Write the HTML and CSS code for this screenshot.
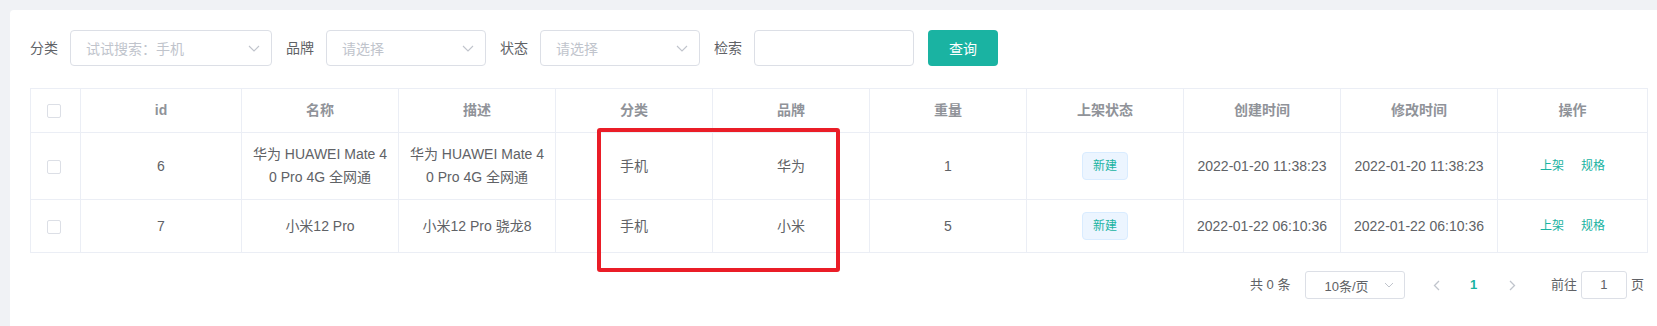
FILE: index.html
```html
<!DOCTYPE html>
<html lang="zh-CN">
<head>
<meta charset="utf-8">
<title>商品列表</title>
<link rel="stylesheet" href="styles.css">
</head>
<body>
<div class="page">
  <div class="card">
    <form class="filters">
      <div class="form-item">
        <label class="form-label">分类</label>
        <div class="select select-wide">
          <span class="placeholder">试试搜索：手机</span>
          <svg class="arrow" width="12" height="7" viewBox="0 0 12 7"><polyline points="1,1 6,6 11,1" fill="none" stroke="#c0c4cc" stroke-width="1.1"/></svg>
        </div>
      </div>
      <div class="form-item">
        <label class="form-label">品牌</label>
        <div class="select select-narrow">
          <span class="placeholder">请选择</span>
          <svg class="arrow" width="12" height="7" viewBox="0 0 12 7"><polyline points="1,1 6,6 11,1" fill="none" stroke="#c0c4cc" stroke-width="1.1"/></svg>
        </div>
      </div>
      <div class="form-item">
        <label class="form-label">状态</label>
        <div class="select select-narrow">
          <span class="placeholder">请选择</span>
          <svg class="arrow" width="12" height="7" viewBox="0 0 12 7"><polyline points="1,1 6,6 11,1" fill="none" stroke="#c0c4cc" stroke-width="1.1"/></svg>
        </div>
      </div>
      <div class="form-item">
        <label class="form-label">检索</label>
        <div class="text-input"></div>
      </div>
      <button type="button" class="btn-primary">查询</button>
    </form>

    <div class="table-wrap">
      <table class="data-table">
        <colgroup>
          <col class="col-check">
          <col class="col-id">
          <col class="col-std"><col class="col-std"><col class="col-std"><col class="col-std">
          <col class="col-std"><col class="col-std"><col class="col-std"><col class="col-std">
          <col class="col-ops">
        </colgroup>
        <thead>
          <tr>
            <th class="check-cell"><div class="cell"><span class="checkbox"></span></div></th>
            <th><div class="cell">id</div></th>
            <th><div class="cell">名称</div></th>
            <th><div class="cell">描述</div></th>
            <th><div class="cell">分类</div></th>
            <th><div class="cell">品牌</div></th>
            <th><div class="cell">重量</div></th>
            <th><div class="cell">上架状态</div></th>
            <th><div class="cell">创建时间</div></th>
            <th><div class="cell">修改时间</div></th>
            <th><div class="cell">操作</div></th>
          </tr>
        </thead>
        <tbody>
          <tr>
            <td class="check-cell"><div class="cell"><span class="checkbox"></span></div></td>
            <td><div class="cell">6</div></td>
            <td><div class="cell">华为 HUAWEI Mate 40 Pro 4G 全网通</div></td>
            <td><div class="cell">华为 HUAWEI Mate 40 Pro 4G 全网通</div></td>
            <td><div class="cell">手机</div></td>
            <td><div class="cell">华为</div></td>
            <td><div class="cell">1</div></td>
            <td><div class="cell"><span class="tag">新建</span></div></td>
            <td><div class="cell">2022-01-20 11:38:23</div></td>
            <td><div class="cell">2022-01-20 11:38:23</div></td>
            <td><div class="cell"><span class="ops"><a class="op-link">上架</a><a class="op-link">规格</a></span></div></td>
          </tr>
          <tr>
            <td class="check-cell"><div class="cell"><span class="checkbox"></span></div></td>
            <td><div class="cell">7</div></td>
            <td><div class="cell">小米12 Pro</div></td>
            <td><div class="cell">小米12 Pro 骁龙8</div></td>
            <td><div class="cell">手机</div></td>
            <td><div class="cell">小米</div></td>
            <td><div class="cell">5</div></td>
            <td><div class="cell"><span class="tag">新建</span></div></td>
            <td><div class="cell">2022-01-22 06:10:36</div></td>
            <td><div class="cell">2022-01-22 06:10:36</div></td>
            <td><div class="cell"><span class="ops"><a class="op-link">上架</a><a class="op-link">规格</a></span></div></td>
          </tr>
        </tbody>
      </table>
      <div class="highlight-box"></div>
    </div>

    <div class="pagination">
      <span class="pg-total">共 0 条</span>
      <span class="pg-sizes">
        <span class="pg-select">
          <span class="pg-select-text">10条/页</span>
          <svg class="pg-select-arrow" width="10" height="6" viewBox="0 0 10 6"><polyline points="1,1 5,5 9,1" fill="none" stroke="#c0c4cc" stroke-width="1"/></svg>
        </span>
      </span>
      <span class="pg-btn pg-prev"><svg width="7" height="11" viewBox="0 0 7 11"><polyline points="6,1 1.5,5.5 6,10" fill="none" stroke="#c0c4cc" stroke-width="1.3"/></svg></span>
      <span class="pg-pager">1</span>
      <span class="pg-btn pg-next"><svg width="7" height="11" viewBox="0 0 7 11"><polyline points="1,1 5.5,5.5 1,10" fill="none" stroke="#c0c4cc" stroke-width="1.3"/></svg></span>
      <span class="pg-jump">
        <span class="pg-jump-text">前往</span>
        <span class="pg-jump-input">1</span>
        <span class="pg-jump-text">页</span>
      </span>
    </div>
  </div>
</div>
</body>
</html>
```

FILE: styles.css
```css
html, body {
  margin: 0;
  padding: 0;
  overflow: hidden;
}

body {
  background: #f0f2f5;
  font-family: "Liberation Sans", Arial, "Noto Sans CJK SC", sans-serif;
  color: #606266;
}

.page {
  padding: 10px 0 0 10px;
}

.card {
  width: 1658px;
  height: 316px;
  box-sizing: border-box;
  background: #ffffff;
  border-radius: 4px 4px 0 0;
  padding: 20px;
}

/* ---------- filter bar ---------- */
.filters {
  display: flex;
  align-items: center;
  gap: 14px;
  height: 36px;
  margin: 0 0 22px 0;
}

.form-item {
  display: flex;
  align-items: center;
}

.form-label {
  font-size: 14px;
  color: #606266;
  padding-right: 12px;
  line-height: 36px;
}

.select {
  height: 36px;
  box-sizing: border-box;
  border: 1px solid #dcdfe6;
  border-radius: 4px;
  display: flex;
  align-items: center;
  padding: 0 11px 0 15px;
  font-size: 14px;
  color: #c0c4cc;
}

.select-wide { width: 202px; }
.select-narrow { width: 160px; }

.placeholder {
  flex: 1;
  white-space: nowrap;
}

.arrow {
  display: block;
  flex: none;
}

.text-input {
  width: 160px;
  height: 36px;
  box-sizing: border-box;
  border: 1px solid #dcdfe6;
  border-radius: 4px;
}

.btn-primary {
  height: 36px;
  width: 70px;
  padding: 0;
  border: none;
  border-radius: 4px;
  background: #1ab3a2;
  color: #ffffff;
  font-family: inherit;
  font-size: 14px;
}

/* ---------- table ---------- */
.table-wrap {
  position: relative;
}

.data-table {
  width: 1618px;
  table-layout: fixed;
  border-collapse: separate;
  border-spacing: 0;
  border-top: 1px solid #ebeef5;
  border-left: 1px solid #ebeef5;
  font-size: 14px;
  color: #606266;
}

.col-check { width: 50px; }
.col-id { width: 161px; }
.col-std { width: 157px; }
.col-ops { width: 150px; }

.data-table th,
.data-table td {
  border-right: 1px solid #ebeef5;
  border-bottom: 1px solid #ebeef5;
  padding: 10px 0;
  text-align: center;
  vertical-align: middle;
}

.data-table th {
  color: #909399;
  font-weight: bold;
}

.cell {
  padding: 0 10px;
  line-height: 23px;
  word-break: break-all;
}

.check-cell .cell {
  text-align: left;
  padding: 0 0 0 16px;
}

.checkbox {
  display: inline-block;
  width: 14px;
  height: 14px;
  box-sizing: border-box;
  border: 1px solid #dcdfe6;
  border-radius: 2px;
  background: #ffffff;
  vertical-align: middle;
}

.tag {
  display: inline-block;
  height: 28px;
  line-height: 26px;
  padding: 0 10px;
  box-sizing: border-box;
  font-size: 12px;
  color: #1ab3a2;
  background: #ecf5ff;
  border: 1px solid #d9ecff;
  border-radius: 4px;
}

.ops {
  display: inline-flex;
  gap: 17px;
}

.op-link {
  display: block;
  height: 32px;
  box-sizing: border-box;
  padding: 9px 0;
  font-size: 12px;
  line-height: 14px;
  color: #1ab3a2;
}

.highlight-box {
  position: absolute;
  left: 567px;
  top: 40px;
  width: 243px;
  height: 144px;
  box-sizing: border-box;
  border: 4px solid #ea1d27;
  border-radius: 3px;
}

/* ---------- pagination ---------- */
.pagination {
  display: flex;
  justify-content: flex-end;
  align-items: center;
  margin-top: 16px;
  padding: 2px 4px 2px 5px;
  font-size: 13px;
  color: #606266;
}

.pg-total {
  line-height: 28px;
  margin-right: 10px;
}

.pg-sizes {
  margin-right: 10px;
}

.pg-select {
  display: flex;
  align-items: center;
  width: 100px;
  height: 28px;
  margin: 0 5px;
  box-sizing: border-box;
  border: 1px solid #dcdfe6;
  border-radius: 3px;
  padding: 0 10px 0 18px;
}

.pg-select-text {
  flex: 1;
  white-space: nowrap;
}

.pg-select-arrow {
  display: block;
}

.pg-btn {
  display: flex;
  align-items: center;
  justify-content: center;
  width: 35.5px;
  height: 28px;
  box-sizing: border-box;
}

.pg-prev { padding-right: 4px; }
.pg-next { padding-left: 6px; }

.pg-pager {
  width: 35.5px;
  height: 28px;
  line-height: 28px;
  text-align: center;
  font-weight: bold;
  color: #1ab3a2;
}

.pg-jump {
  display: flex;
  align-items: center;
  margin-left: 24px;
}

.pg-jump-text {
  line-height: 28px;
}

.pg-jump-input {
  width: 46px;
  height: 28px;
  margin: 0 4px;
  box-sizing: border-box;
  border: 1px solid #dcdfe6;
  border-radius: 3px;
  text-align: center;
  line-height: 26px;
}
```
